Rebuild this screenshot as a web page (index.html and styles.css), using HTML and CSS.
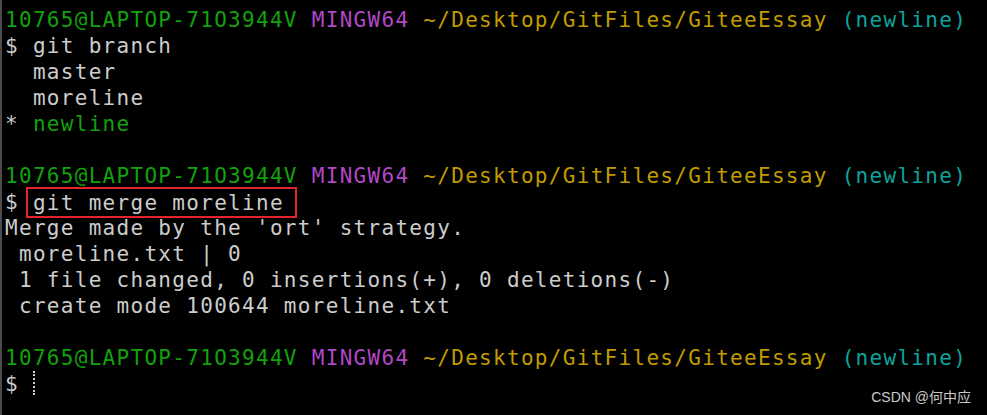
FILE: index.html
```html
<!DOCTYPE html>
<html>
<head>
<meta charset="utf-8">
<link rel="stylesheet" href="styles.css">
</head>
<body>
<div class="term">
<div class="line"><span class="g">10765@LAPTOP-71O3944V</span> <span class="m">MINGW64</span> <span class="y">~/Desktop/GitFiles/GiteeEssay</span> <span class="c">(newline)</span></div>
<div class="line">$ git branch</div>
<div class="line">  master</div>
<div class="line">  moreline</div>
<div class="line">* <span class="g">newline</span></div>
<div class="line"> </div>
<div class="line"><span class="g">10765@LAPTOP-71O3944V</span> <span class="m">MINGW64</span> <span class="y">~/Desktop/GitFiles/GiteeEssay</span> <span class="c">(newline)</span></div>
<div class="line">$ <span class="box">git merge moreline</span></div>
<div class="line">Merge made by the 'ort' strategy.</div>
<div class="line"> moreline.txt | 0</div>
<div class="line"> 1 file changed, 0 insertions(+), 0 deletions(-)</div>
<div class="line"> create mode 100644 moreline.txt</div>
<div class="line"> </div>
<div class="line"><span class="g">10765@LAPTOP-71O3944V</span> <span class="m">MINGW64</span> <span class="y">~/Desktop/GitFiles/GiteeEssay</span> <span class="c">(newline)</span></div>
<div class="line">$ <span class="cursor"></span></div>
</div>
<div class="mark">CSDN @何中应</div>
</body>
</html>
```
FILE: styles.css
```css
html, body {
  margin: 0;
  padding: 0;
  background: #000;
  width: 987px;
  height: 415px;
  overflow: hidden;
}
body {
  position: relative;
}
.term {
  box-sizing: border-box;
  height: 415px;
  border-left: 2px solid #4c4c4c;
  padding: 7px 0 0 3px;
  font-family: "DejaVu Sans Mono", "Liberation Mono", monospace;
  font-size: 21px;
  letter-spacing: 1.3px;
  line-height: 26px;
  color: #cccccc;
}
.line {
  white-space: pre;
  height: 26px;
}
.g { color: #13a10e; }
.m { color: #b148c6; }
.y { color: #c19c00; }
.c { color: #0da39c; }
.box {
  border: 2px solid #e5232c;
  padding: 1.5px 11px 2px 5px;
  margin: 0 -13px 0 -7px;
}
.cursor {
  display: inline-block;
  width: 0;
  height: 24px;
  border-left: 2px dotted #cccccc;
  vertical-align: top;
}
.mark {
  position: absolute;
  right: 16px;
  bottom: 9px;
  font-family: "Liberation Sans", "Noto Sans CJK SC", sans-serif;
  font-size: 14px;
  color: #c9c9c9;
}
```
